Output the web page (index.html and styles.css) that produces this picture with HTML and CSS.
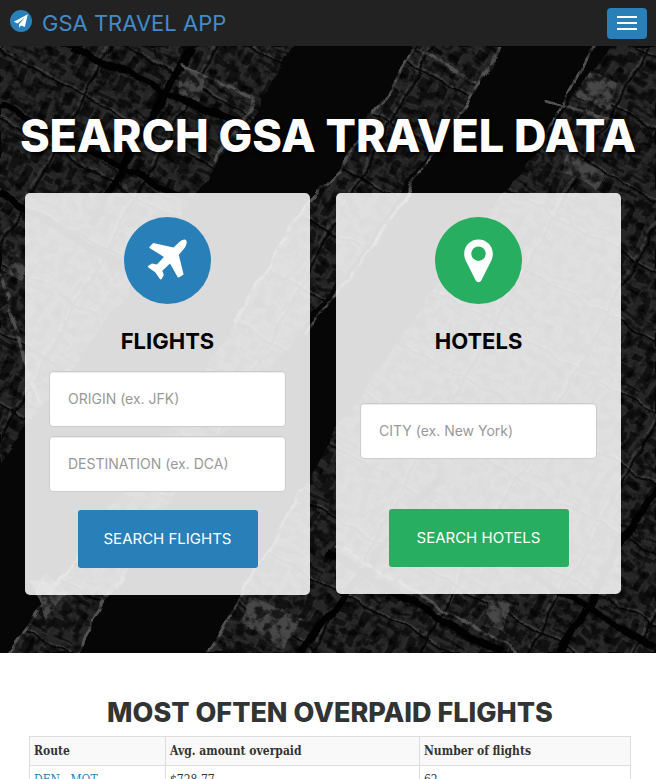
FILE: index.html
```html
<!DOCTYPE html>
<html lang="en">
<head>
<meta charset="utf-8">
<meta name="viewport" content="width=device-width, initial-scale=1">
<title>GSA Travel App</title>
<link rel="stylesheet" href="styles.css">
</head>
<body>
<header class="navbar">
  <a class="brand" href="#">
    <svg class="brand-icon" viewBox="0 0 22 22" aria-hidden="true">
      <circle cx="11" cy="11" r="11" fill="#2980b9"/>
      <path d="M17.8 4.2 3.8 11.8l3.8 1.7L15.3 7 9 14.2v3.6l2-2.3 3.8 1.6z" fill="#fff"/>
    </svg>
    <span>GSA TRAVEL APP</span>
  </a>
  <button class="menu-toggle" type="button" aria-label="Menu">
    <span class="bar"></span><span class="bar"></span><span class="bar"></span>
  </button>
</header>
<main>
  <section class="hero">
    <svg class="hero-map" viewBox="0 0 656 607" preserveAspectRatio="xMidYMid slice" aria-hidden="true">
      <defs>
        <pattern id="blocks" width="94" height="62" patternUnits="userSpaceOnUse" patternTransform="rotate(29)">
          <path d="M0 0H94V62H0z" fill="#202020"/>
          <path d="M6 7h15v12H6zM28 6h9v17h-9zM44 8h25v6H44zM44 20h12v10H44zM64 20h9v25h-9zM6 26h14v8H6zM25 30h10v16H25zM7 40h11v6H7zM41 38h14v9H41zM80 8h9v14h-9zM79 30h10v24H79zM12 52h30v5H12zM50 52h20v4H50z" fill="#101010" stroke="#2b2b2b"/>
          <path d="M0 1H94M1 0V62" stroke="#363636" stroke-width="1.5"/>
          <path d="M0 3H94M4 0V62" stroke="#080808" stroke-width="2"/>
        </pattern>
        <filter id="grain" x="0" y="0" width="100%" height="100%" color-interpolation-filters="sRGB">
          <feTurbulence type="fractalNoise" baseFrequency=".035" numOctaves="2" seed="4" result="warp"/>
          <feDisplacementMap in="SourceGraphic" in2="warp" scale="12" xChannelSelector="R" yChannelSelector="G" result="d"/>
          <feTurbulence type="fractalNoise" baseFrequency=".11" numOctaves="4" seed="7" result="n"/>
          <feColorMatrix in="n" type="matrix" values="4 0 0 0 -1.3 4 0 0 0 -1.3 4 0 0 0 -1.3 0 0 0 0 1" result="g"/>
          <feComposite in="d" in2="g" operator="arithmetic" k1=".8" k2=".4" result="m"/>
          <feComposite in="m" in2="d" operator="in"/>
          <feGaussianBlur stdDeviation=".7"/>
        </filter>
      </defs>
      <path d="M0 0H656V607H0z" fill="#060606"/>
      <g filter="url(#grain)">
        <path d="M0 0H292L264 54 217 118 180 170 100 285 38 365 0 417z" fill="url(#blocks)"/>
        <path d="M416 0H502L472 48 447 84 402 144 366 203 310 270 248 354 180 442 126 520 78 607H8L50 550 100 477 150 404 230 288 302 161 342 119 378 62z" fill="url(#blocks)"/>
        <path d="M612 0H656V607H208L246 541 304 443 336 383 405 284 490 162 548 94 568 55z" fill="url(#blocks)"/>
        <path d="M184 20l22 12-8 24-19-10zM590 24l28 12-8 31-34-18zM566 110l40 18-9 16-33-18zM488 552l22 8-6 26-21-8zM250 548l50 24-16 30-42-22zM30 534l20-8 17 22-22 25zM18 204l13 9-9 22-20-11z" fill="#3b3b3b"/>
        <path d="M0 146 132 229M70 0 292 105M0 60 200 162M192 0 90 180M330 506 500 607M560 607 656 440M300 607 440 430M500 510 656 602" fill="none" stroke="#020202" stroke-width="7"/>
        <path d="M500 0 470 54 444 91 402 155 366 210 304 288M416 0 378 62 342 119 302 161 236 277M8 607 50 550 100 477M78 607 126 520M418 4 476 38M180 18 255 53 215 116M594 0 560 60 540 105M0 228 38 360M336 500 520 607M208 607 304 443M545 55 612 76" fill="none" stroke="#444" stroke-width="3"/>
      </g>
    </svg>
    <div class="hero-content">
      <h1>SEARCH GSA TRAVEL DATA</h1>
      <div class="cards">
        <form class="card flights">
          <svg class="card-icon" viewBox="0 0 87 87" aria-hidden="true">
            <circle cx="43.5" cy="43.5" r="43.5" fill="#2980b9"/>
            <path d="M62 23.2c1.4 1.2.8 5.4-2.8 9.6l-4.4 5 4.8 19.8-4.8 2.9c-.8.2-1.2-.2-1.5-.9L46 46.5l-7.7 7.3 1.5 4.3-2.1 3.9c-.8.8-1.5.4-2-.3l-4.5-6.5-6.8-4.7c-.8-.6-.8-1.2 0-1.8l3.5-2.1 5 .8 7-7.5L26 31.3c-.7-.4-.9-.9-.4-1.5l3.6-3.7 20.4 4.5 5-4.8c3.2-3 6.4-4 7.4-2.6z" fill="#fff"/>
          </svg>
          <h2>FLIGHTS</h2>
          <div class="fields">
            <input type="text" aria-label="Origin" placeholder="ORIGIN (ex. JFK)">
            <input type="text" aria-label="Destination" placeholder="DESTINATION (ex. DCA)">
          </div>
          <button class="search" type="submit">SEARCH FLIGHTS</button>
        </form>
        <form class="card hotels">
          <svg class="card-icon" viewBox="0 0 87 87" aria-hidden="true">
            <circle cx="43.5" cy="43.5" r="43.5" fill="#27ae60"/>
            <path fill-rule="evenodd" d="M43.5 22.5c-8 0-14.3 6.3-14.3 14 0 2.7.5 5 1.6 7.2l9.8 19.6c1.2 2.5 4.6 2.5 5.8 0l9.8-19.6c1.1-2.2 1.6-4.5 1.6-7.2 0-7.7-6.3-14-14.3-14zm0 7a7.2 7.2 0 1 1 0 14.4 7.2 7.2 0 0 1 0-14.4z" fill="#fff"/>
          </svg>
          <h2>HOTELS</h2>
          <div class="fields">
            <input type="text" aria-label="City" placeholder="CITY (ex. New York)">
          </div>
          <button class="search" type="submit">SEARCH HOTELS</button>
        </form>
      </div>
    </div>
  </section>
  <section class="overpaid">
    <h2>MOST OFTEN OVERPAID FLIGHTS</h2>
    <table>
      <thead>
        <tr><th class="route">Route</th><th class="amount">Avg. amount overpaid</th><th>Number of flights</th></tr>
      </thead>
      <tbody>
        <tr><td><a href="#">DEN - MOT</a></td><td>$728.77</td><td>62</td></tr>
      </tbody>
    </table>
  </section>
</main>
</body>
</html>
```
FILE: styles.css
```css
* { box-sizing: border-box; }
body {
  margin: 0;
  background: #fff;
  color: #333;
  font-family: Inter, "Liberation Sans", sans-serif;
}
h1, h2 { margin: 0; font-weight: 800; text-align: center; }
button, input { font-family: inherit; }

.navbar {
  display: flex;
  align-items: center;
  justify-content: space-between;
  height: 46px;
  padding: 0 9px 0 10px;
  background: #222;
}
.brand {
  display: flex;
  align-items: center;
  gap: 10px;
  color: #428bca;
  font-size: 22px;
  line-height: 46px;
  text-decoration: none;
}
.brand-icon { width: 22px; height: 22px; margin-bottom: 4px; }
.menu-toggle {
  display: flex;
  flex-direction: column;
  justify-content: center;
  gap: 4px;
  width: 40px;
  height: 31px;
  padding: 0 10px;
  border: 0;
  border-radius: 4px;
  background: #2980b9;
}
.bar { height: 2px; background: #fff; }

.hero { position: relative; background: #060606; }
.hero-map { position: absolute; inset: 0; width: 100%; height: 100%; }
.hero-content { position: relative; padding: 60px 0 58px; }
h1 {
  color: #fff;
  font-size: 45px;
  line-height: 60px;
  white-space: nowrap;
  text-shadow: 2px 2px 4px #000;
}
.cards {
  display: grid;
  grid-template-columns: 1fr 1fr;
  align-items: start;
  gap: 26px;
  padding: 27px 35px 0 25px;
}
.card {
  display: flex;
  flex-direction: column;
  align-items: center;
  padding: 24px 24px 27px;
  border-radius: 5px;
  background: rgba(255, 255, 255, .86);
}
.card-icon { width: 87px; height: 87px; }
.card h2 {
  margin: 22px 0 14px;
  color: #000;
  font-size: 22px;
  font-weight: 700;
  line-height: 31px;
}
.fields {
  display: flex;
  flex-direction: column;
  gap: 9px;
  width: 100%;
  padding-bottom: 18px;
}
.hotels .fields { padding: 32px 0 50px; }
.fields input {
  width: 100%;
  height: 56px;
  padding: 0 18px 2px;
  border: 1px solid #ccc;
  border-radius: 4px;
  background: #fff;
  box-shadow: inset 0 1px 1px rgba(0, 0, 0, .08);
  color: #555;
  font-size: 14px;
}
.fields input::placeholder { color: #999; opacity: 1; }
.search {
  width: 180px;
  height: 58px;
  padding: 0 0 2px;
  border: 0;
  border-radius: 3px;
  background: #2980b9;
  color: #fff;
  font-size: 15px;
}
.hotels .search { background: #27ae60; }

.overpaid { padding: 43px 25px 40px 29px; }
.overpaid h2 { font-size: 27px; line-height: 34px; }
table {
  width: 100%;
  margin-top: 6px;
  border-collapse: collapse;
  font-family: "DejaVu Serif Condensed", "DejaVu Serif", serif;
  font-size: 12px;
  line-height: 20px;
  table-layout: fixed;
}
th, td { padding: 4px; border: 1px solid #ddd; text-align: left; }
thead { background: #f9f9f9; }
.route { width: 136px; }
.amount { width: 254px; }
td a { color: #2980b9; text-decoration: none; }
```
